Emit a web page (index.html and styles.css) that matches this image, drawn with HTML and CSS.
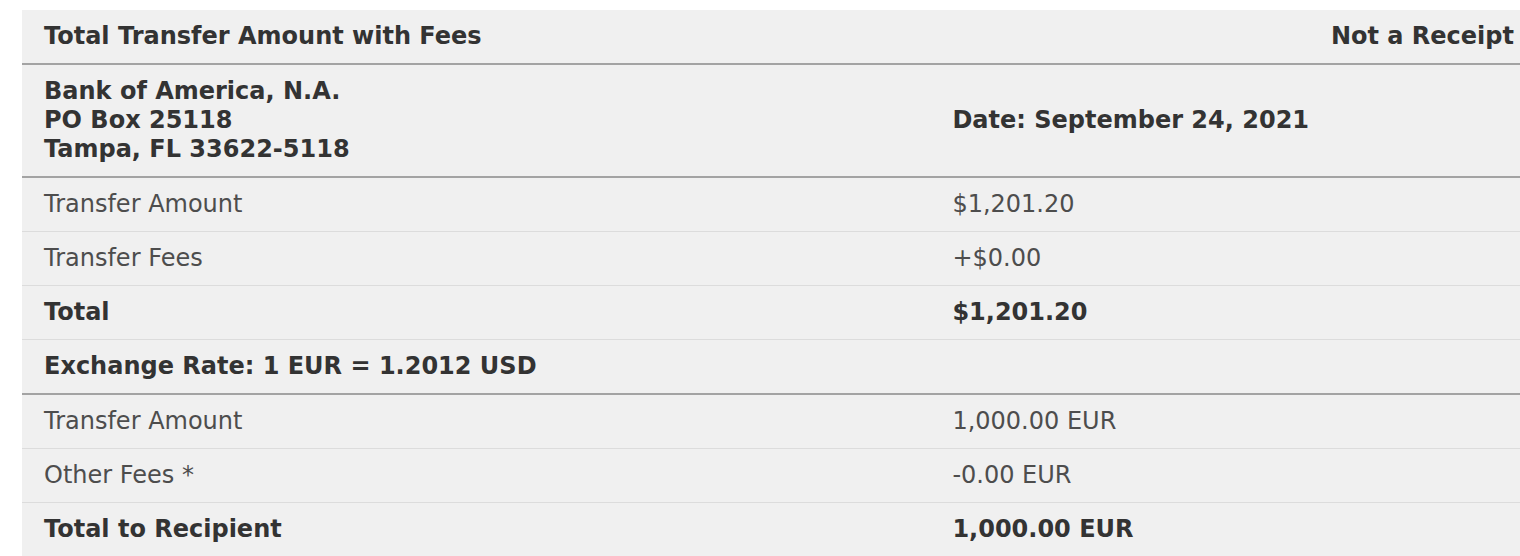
FILE: index.html
```html
<!DOCTYPE html>
<html lang="en">
<head>
    <meta charset="UTF-8">
    <meta name="viewport" content="width=device-width, initial-scale=1.0">
    <title>Transfer Summary</title>
    <link rel="stylesheet" href="styles.css">
</head>
<body>
    <div class="summary">
        <table class="summary-table">
            <colgroup>
                <col class="col-label">
                <col class="col-value">
            </colgroup>
            <tr class="row-head">
                <th>Total Transfer Amount with Fees</th>
                <th class="align-right">Not a Receipt</th>
            </tr>
            <tr class="row-section">
                <td class="strong">Bank of America, N.A.<br>PO Box 25118<br>Tampa, FL 33622-5118</td>
                <td class="strong">Date: September 24, 2021</td>
            </tr>
            <tr>
                <td>Transfer Amount</td>
                <td>$1,201.20</td>
            </tr>
            <tr>
                <td>Transfer Fees</td>
                <td>+$0.00</td>
            </tr>
            <tr>
                <td class="strong">Total</td>
                <td class="strong">$1,201.20</td>
            </tr>
            <tr class="row-section">
                <td class="strong">Exchange Rate: 1 EUR = 1.2012 USD</td>
                <td></td>
            </tr>
            <tr>
                <td>Transfer Amount</td>
                <td>1,000.00 EUR</td>
            </tr>
            <tr>
                <td>Other Fees *</td>
                <td>-0.00 EUR</td>
            </tr>
            <tr>
                <td class="strong">Total to Recipient</td>
                <td class="strong">1,000.00 EUR</td>
            </tr>
        </table>
    </div>
</body>
</html>
```

FILE: styles.css
```css
:root {
    --panel-color: #f0f0f0;
    --text-color: #4d4d4d;
    --strong-color: #333333;
    --rule-strong: #a3a3a3;
    --rule-light: #dcdcdc;
}

* {
    margin: 0;
    padding: 0;
    box-sizing: border-box;
    font-family: 'DejaVu Sans', Verdana, sans-serif;
}

body {
    background-color: #ffffff;
    color: var(--text-color);
    padding: 10px 0 0 22px;
    overflow: hidden;
}

.summary {
    width: 1514px;
}

.summary-table {
    width: 100%;
    border-collapse: collapse;
    background: var(--panel-color);
    font-size: 24px;
    line-height: 29px;
}

.col-label {
    width: 60%;
}

.summary-table th,
.summary-table td {
    text-align: left;
    vertical-align: middle;
    padding: 12px 22px;
    border-bottom: 1px solid var(--rule-light);
}

.summary-table th {
    font-weight: 700;
    color: var(--strong-color);
}

.summary-table .align-right {
    text-align: right;
}

.row-head th,
.row-section td {
    border-bottom: 2px solid var(--rule-strong);
}

.strong {
    font-weight: 700;
    color: var(--strong-color);
}
```
